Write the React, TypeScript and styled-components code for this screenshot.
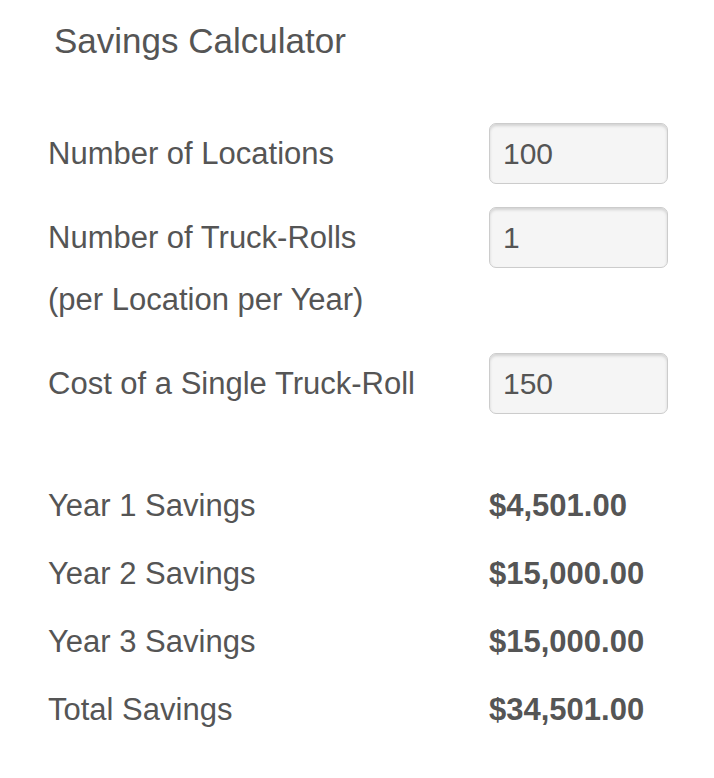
import styled, { createGlobalStyle } from "styled-components";

const GlobalStyle = createGlobalStyle`
  body {
    margin: 0;
    background: #ffffff;
    font-family: "Liberation Sans", Arial, Helvetica, sans-serif;
    color: #555555;
  }
`;

interface Campo {
  id: string;
  label: string[];
  value: string;
}

interface Resultado {
  label: string;
  value: string;
}

const campos: Campo[] = [
  { id: "locations", label: ["Number of Locations"], value: "100" },
  { id: "rolls", label: ["Number of Truck-Rolls", "(per Location per Year)"], value: "1" },
  { id: "cost", label: ["Cost of a Single Truck-Roll"], value: "150" },
];

const resultados: Resultado[] = [
  { label: "Year 1 Savings", value: "$4,501.00" },
  { label: "Year 2 Savings", value: "$15,000.00" },
  { label: "Year 3 Savings", value: "$15,000.00" },
  { label: "Total Savings", value: "$34,501.00" },
];

export default function App() {
  return (
    <>
      <GlobalStyle />
      <Pagina>
        <Titulo>Savings Calculator</Titulo>
        <Formulario>
          {campos.map((campo) => (
            <Linha key={campo.id}>
              <Rotulo htmlFor={campo.id}>
                {campo.label.map((parte) => (
                  <span key={parte}>{parte}</span>
                ))}
              </Rotulo>
              <Campo id={campo.id} type="text" defaultValue={campo.value} />
            </Linha>
          ))}
        </Formulario>
        <Resultados>
          {resultados.map((r) => (
            <LinhaResultado key={r.label}>
              <span>{r.label}</span>
              <Valor>{r.value}</Valor>
            </LinhaResultado>
          ))}
        </Resultados>
      </Pagina>
    </>
  );
}

const Pagina = styled.div`
  padding: 21px 0 40px 48px;
  width: 620px;
`;

const Titulo = styled.h2`
  margin: 0 0 62px 0;
  padding-left: 6px;
  font-size: 35px;
  line-height: 40px;
  font-weight: normal;
  color: #555555;
`;

const Formulario = styled.form`
  display: flex;
  flex-direction: column;
  gap: 22px;
`;

const Linha = styled.div`
  display: grid;
  grid-template-columns: 441px 179px;
  align-items: start;
`;

const Rotulo = styled.label`
  display: flex;
  flex-direction: column;
  font-size: 31px;
  line-height: 62px;
  color: #555555;
`;

const Campo = styled.input`
  box-sizing: border-box;
  width: 179px;
  height: 61px;
  padding: 0 13px;
  border: 1px solid #cccccc;
  border-radius: 7px;
  background: #f5f5f5;
  box-shadow: inset 0 2px 3px rgba(0, 0, 0, 0.14);
  font-family: "Liberation Sans", Arial, Helvetica, sans-serif;
  font-size: 30px;
  color: #555555;
  outline: none;
`;

const Resultados = styled.div`
  margin-top: 57px;
  display: flex;
  flex-direction: column;
`;

const LinhaResultado = styled.div`
  display: grid;
  grid-template-columns: 441px 179px;
  font-size: 31px;
  line-height: 68px;
  color: #555555;
`;

const Valor = styled.span`
  font-weight: bold;
`;
